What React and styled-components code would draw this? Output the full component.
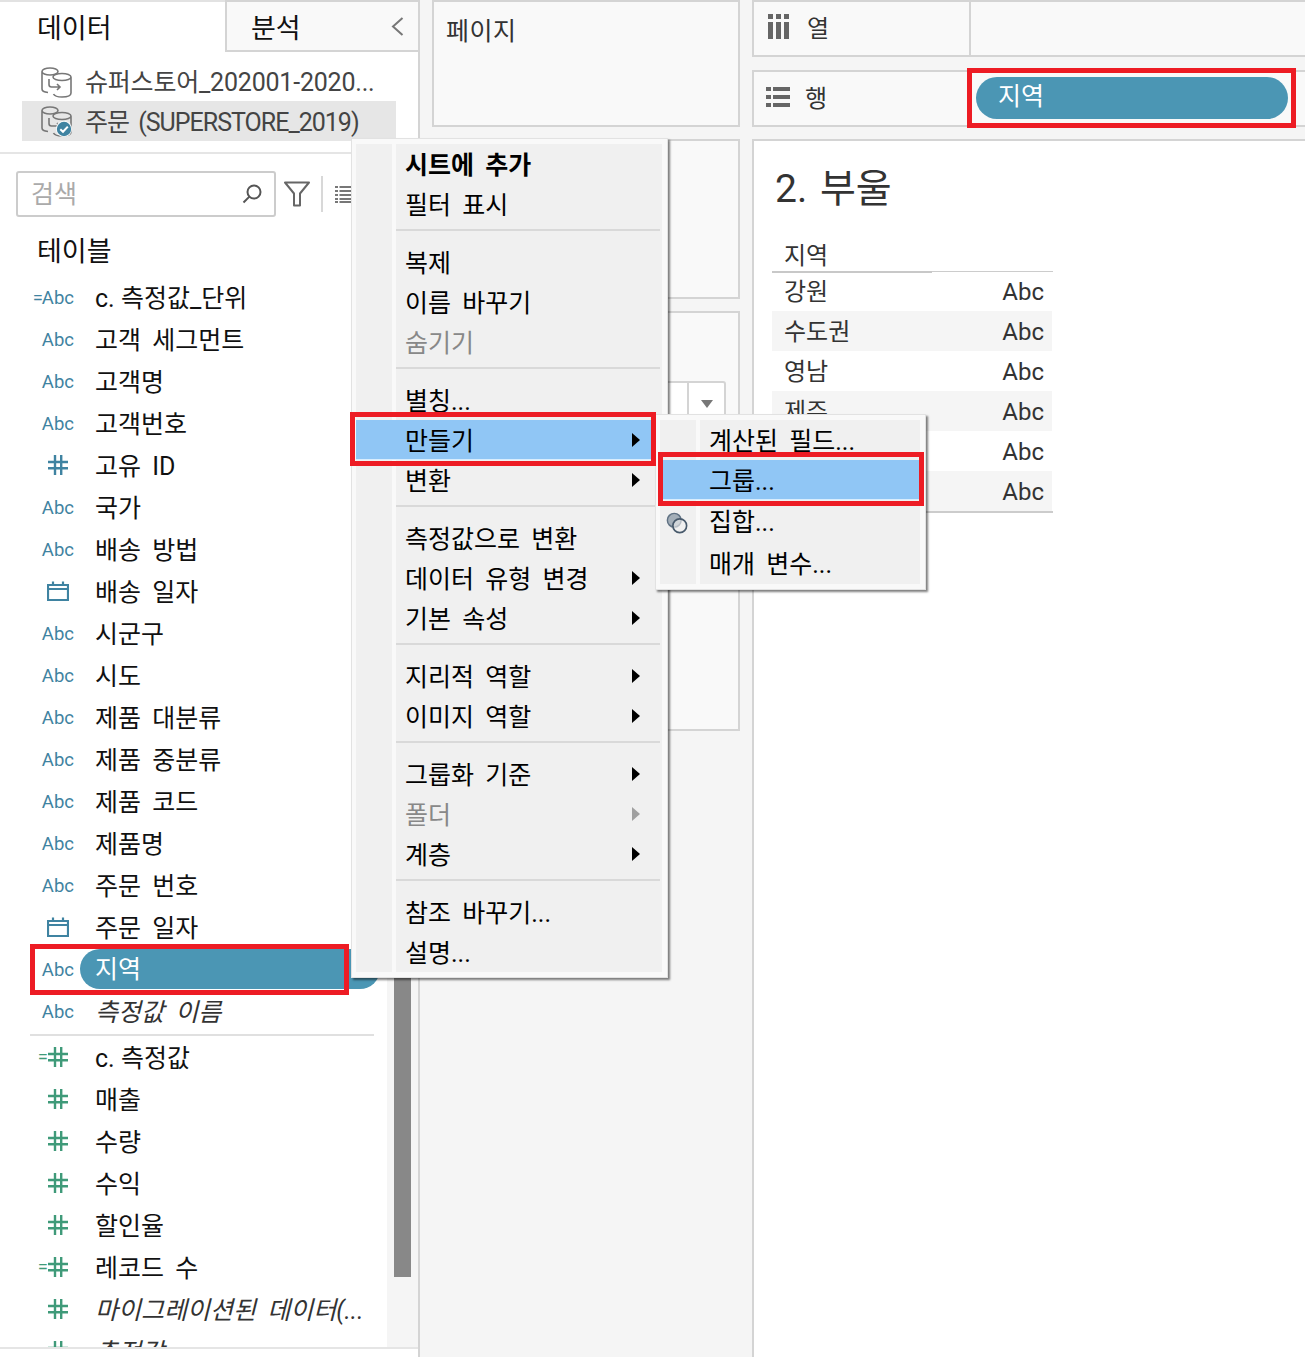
import React from "react";
import styled, { createGlobalStyle } from "styled-components";

const GlobalStyle = createGlobalStyle`
    html, body {
        margin: 0;
        padding: 0;
        background: #ffffff;
    }
    * {
        box-sizing: border-box;
    }
    body {
        font-family: Roboto, "Noto Sans CJK KR", sans-serif;
        word-spacing: 5px;
    }
`;

const BORDER = "#d4d4d4";
const TEAL = "#4b96b4";
const BLUE_ICON = "#3f83a1";
const GREEN_ICON = "#3f9a79";
const RED = "#ed1c24";

const Page = styled.div`
    position: relative;
    display: grid;
    grid-template-columns: 420px 332px 553px;
    width: 1305px;
    height: 1357px;
    overflow: hidden;
    background: #f5f5f5;
`;

const RedBox = styled.div`
    position: absolute;
    top: ${(p) => p.$top}px;
    left: ${(p) => p.$left}px;
    width: ${(p) => p.$width}px;
    height: ${(p) => p.$height}px;
    border: 5px solid ${RED};
    z-index: 3;
    pointer-events: none;
`;

/* left side */
const LeftPanel = styled.aside`
    display: flex;
    flex-direction: column;
    height: 1357px;
    background: #ffffff;
    border-right: 2px solid ${BORDER};
`;

const TabBar = styled.div`
    display: flex;
    height: 52px;
    flex: none;
`;

const DataTab = styled.div`
    display: flex;
    align-items: center;
    width: 225px;
    padding-left: 37px;
    padding-bottom: 2px;
    font-size: 27px;
    color: #111;
    border-top: 2px solid #e2e2e2;
`;

const AnalysisTab = styled.div`
    display: flex;
    flex: 1;
    align-items: center;
    justify-content: space-between;
    padding: 0 14px 0 24px;
    font-size: 27px;
    color: #111;
    background: #f9f9f9;
    border: 2px solid ${BORDER};
    border-right: 0;
`;

const SourceList = styled.div`
    flex: none;
    padding-top: 10px;
    padding-bottom: 11px;
    border-bottom: 2px solid #e5e5e5;
`;

const SourceRow = styled.div`
    display: flex;
    align-items: center;
    gap: 13px;
    width: 374px;
    height: ${(p) => (p.$active ? 40 : 39)}px;
    margin-left: 22px;
    padding-left: 18px;
    font-size: 25px;
    color: #444;
    white-space: nowrap;
    background: ${(p) => (p.$active ? "#e6e6e6" : "transparent")};
`;

const SourceName = styled.span`
    margin-top: -3px;
    letter-spacing: ${(p) => p.$tracking}px;
    word-spacing: 4px;
`;

const Lower = styled.div`
    display: flex;
    flex: none;
    height: 1193px;
    overflow: hidden;
`;

const LowerMain = styled.div`
    flex: 1;
    min-width: 0;
`;

const SearchRow = styled.div`
    display: flex;
    align-items: center;
    height: 46px;
    margin-top: 17px;
    padding-left: 16px;
`;

const SearchBox = styled.div`
    display: flex;
    align-items: center;
    justify-content: space-between;
    width: 260px;
    height: 46px;
    padding: 0 12px 0 13px;
    font-size: 25px;
    color: #aaa;
    border: 2px solid #cccccc;
    border-radius: 3px;
`;

const SearchHint = styled.span`
    margin-top: -4px;
`;

const FilterButton = styled.div`
    display: flex;
    margin-left: 8px;
`;

const ToolDivider = styled.div`
    width: 2px;
    height: 36px;
    margin: 0 12px 0 11px;
    background: #d8d8d8;
`;

const SectionTitle = styled.div`
    display: flex;
    align-items: center;
    height: 59px;
    padding: 6px 0 0 37px;
    font-size: 27px;
    color: #111;
`;

const FieldRow = styled.div`
    position: relative;
    display: flex;
    align-items: center;
    height: 42px;
    font-size: 25px;
    color: #111;
    white-space: nowrap;
`;

const IconSlot = styled.div`
    display: flex;
    flex: none;
    align-items: center;
    justify-content: flex-end;
    width: 74px;
    padding-top: ${(p) => (p.$text ? 2 : 0)}px;
    font-size: 18.5px;
    color: ${(p) => p.$color};
    word-spacing: 0;
`;

const CalcMark = styled.span`
    margin-right: ${(p) => p.$gap}px;
`;

const FieldName = styled.span`
    margin-left: 21px;
    padding-bottom: 2px;
    font-style: ${(p) => (p.$italic ? "italic" : "normal")};
    color: ${(p) => (p.$italic ? "#333" : "#111")};
    word-spacing: ${(p) => (p.$tight ? 0 : 5)}px;
`;

const FieldPill = styled.div`
    display: flex;
    align-items: center;
    width: 300px;
    height: 40px;
    margin-left: 6px;
    padding: 0 0 4px 15px;
    font-size: 25px;
    color: #ffffff;
    background: ${TEAL};
    border-radius: 20px;
`;

const FieldDivider = styled.div`
    width: 344px;
    height: 2px;
    margin: 2px 0 0 30px;
    background: #e0e0e0;
`;

const ScrollTrack = styled.div`
    flex: none;
    width: 31px;
    padding: 10px 7px 0;
    background: #f5f5f5;
`;

const ScrollThumb = styled.div`
    height: 1113px;
    background: #888888;
`;

const LowerRule = styled.div`
    flex: none;
    height: 2px;
    background: #e5e5e5;
`;

/* middle cards */
const MiddleColumn = styled.section`
    display: flex;
    flex-direction: column;
    gap: 12px;
    padding: 0 12px;
`;

const Card = styled.div`
    flex: none;
    height: ${(p) => p.$height}px;
    padding: 15px 12px;
    font-size: 25px;
    line-height: 30px;
    letter-spacing: 0.5px;
    color: #333;
    background: #f9f9f9;
    border: 2px solid ${BORDER};
`;

const Dropdown = styled.div`
    display: flex;
    justify-content: flex-end;
    height: 44px;
    margin-top: 23px;
    background: #ffffff;
    border: 2px solid ${BORDER};
    border-radius: 3px;
`;

const DropLabel = styled.span`
    flex: 1;
    padding-left: 10px;
`;

const DropButton = styled.div`
    display: flex;
    justify-content: center;
    width: 37px;
    padding-top: 17px;
    border-left: 2px solid ${BORDER};
`;

const DropArrow = styled.span`
    width: 0;
    height: 0;
    border-top: 8px solid #777;
    border-left: 6px solid transparent;
    border-right: 6px solid transparent;
`;

/* right side */
const RightColumn = styled.main`
    display: flex;
    flex-direction: column;
`;

const Shelf = styled.div`
    display: flex;
    flex: none;
    align-items: center;
    height: ${(p) => p.$height}px;
    margin-bottom: ${(p) => p.$gap}px;
    background: #f9f9f9;
    border: 2px solid ${BORDER};
    border-right: 0;
`;

const ShelfLabel = styled.div`
    display: flex;
    flex: none;
    align-items: center;
    gap: ${(p) => (p.$divider ? 18 : 15)}px;
    width: ${(p) => (p.$divider ? 217 : 222)}px;
    height: 100%;
    padding-left: ${(p) => (p.$divider ? 14 : 12)}px;
    padding-bottom: 4px;
    font-size: 24px;
    color: #333;
    border-right: ${(p) => (p.$divider ? `2px solid ${BORDER}` : "0")};
`;

const ShelfPill = styled.div`
    position: relative;
    display: flex;
    align-items: center;
    width: 312px;
    height: 42px;
    margin-top: -2px;
    padding: 0 0 8px 22px;
    font-size: 25px;
    color: #ffffff;
    background: ${TEAL};
    border-radius: 21px;
`;

const View = styled.div`
    flex: 1;
    background: #ffffff;
    border-top: 2px solid ${BORDER};
    border-left: 2px solid ${BORDER};
`;

const ViewTitle = styled.h1`
    height: 97px;
    margin: 0;
    padding: 18px 0 0 21px;
    font-size: 39px;
    font-weight: 400;
    line-height: 60px;
    word-spacing: 3px;
    color: #333;
`;

const VizTable = styled.div`
    width: 281px;
    margin-left: 18px;
    font-size: 24px;
    color: #333;
    border-bottom: 2px solid #cccccc;
`;

const VizHeader = styled.div`
    height: 34px;
    border-bottom: 1px solid #cccccc;
`;

const VizHeaderCell = styled.div`
    width: 160px;
    height: 35px;
    padding-left: 12px;
    line-height: 36px;
    border-bottom: 2px solid #c8c8c8;
`;

const VizRow = styled.div`
    display: flex;
    align-items: center;
    justify-content: space-between;
    width: 280px;
    height: 40px;
    padding: 0 8px 0 12px;
    &:first-child {
        height: 39px;
    }
    &:nth-child(even) {
        background: #f5f5f5;
    }
`;

const VizName = styled.span`
    padding-bottom: 4px;
`;

const VizValue = styled.span`
    padding-top: 1px;
`;

/* context menu */
const Menu = styled.div`
    position: absolute;
    top: ${(p) => p.$top}px;
    left: ${(p) => p.$left}px;
    width: ${(p) => p.$width}px;
    padding: 5px 5px 5px 4px;
    background: #f9f9f9;
    border: 1px solid #e2e2e2;
    box-shadow: 2px 2px 2px rgba(0, 0, 0, 0.5);
    z-index: ${(p) => p.$z};
`;

const MenuRow = styled.div`
    position: relative;
    display: flex;
    height: ${(p) => p.$height || 40}px;
    font-size: 25px;
    color: ${(p) => (p.$disabled ? "#888" : "#000")};
    font-weight: ${(p) => (p.$bold ? 700 : 400)};
    white-space: nowrap;
    background: ${(p) => (p.$selected ? "#90c6f5" : "transparent")};
    box-shadow: ${(p) => (p.$selected ? "inset 0 -1px 0 #d9edfd" : "none")};
`;

const MenuGutter = styled.div`
    display: flex;
    flex: none;
    align-items: center;
    justify-content: center;
    width: 36px;
    margin-right: 4px;
    background: ${(p) => (p.$selected ? "transparent" : "#f0f0f0")};
`;

const MenuLabel = styled.div`
    display: flex;
    flex: 1;
    align-items: center;
    padding: 0 22px 3px 9px;
    background: ${(p) => (p.$selected ? "transparent" : "#f0f0f0")};
`;

const SubArrow = styled.span`
    flex: none;
    width: 0;
    height: 0;
    margin-left: auto;
    margin-top: 3px;
    border-left: 8px solid ${(p) => (p.$disabled ? "#a0a0a0" : "#000")};
    border-top: 7px solid transparent;
    border-bottom: 7px solid transparent;
`;

const MenuRule = styled.div`
    height: 2px;
    margin: 5px 2px 11px 0;
    background: #d9d9d9;
`;

const MenuSeparator = styled.div`
    display: flex;
    height: 18px;
`;

const SeparatorBody = styled.div`
    flex: 1;
    background: #f0f0f0;
    overflow: hidden;
`;

const VennSlot = styled.div`
    display: flex;
    margin: 4px 2px 0 0;
`;

const HashIcon = ({ color, right = 6 }) => (
    <svg width="20" height="20" viewBox="0 0 20 20" style={{ marginRight: right }}>
        <path d="M7 0V20M13.2 0V20M0 7H20M0 13.2H20" stroke={color} strokeWidth="2.4" fill="none" />
    </svg>
);

const CalendarIcon = () => (
    <svg width="22" height="20" viewBox="0 0 22 20" style={{ marginRight: 5 }}>
        <path
            d="M1 4H21V19H1ZM1 8H21M6 0.5V4M16 0.5V4"
            stroke={BLUE_ICON}
            strokeWidth="2.2"
            fill="none"
        />
    </svg>
);

const SourceIcon = ({ badge }) => (
    <svg width="32" height="32" viewBox="0 0 32 32" fill="none">
        <g stroke="#777" strokeWidth="1.6">
            <path d="M2 5.5C2 3.5 5.5 2 10 2S18 3.5 18 5.5C18 7.5 14.5 9 10 9S2 7.5 2 5.5ZM2 5.5V23C2 25 4.5 26.2 8 26.5" />
            <path d="M13 11C13 9 17 7.5 22 7.5S31 9 31 11C31 13 27 14.5 22 14.5S13 13 13 11ZM31 11V27C31 29.5 27 31 22 31C18 31 14.5 30 13.5 28" />
            <path d="M9 13V18.5C9 20 10 21 11.5 21H20M17 18L20 21L17 24" />
        </g>
        {badge && (
            <g>
                <circle cx="24" cy="24" r="8" fill="#ffffff" />
                <circle cx="24" cy="24" r="7.2" fill={BLUE_ICON} />
                <path d="M20.3 24.2L23 26.8L27.8 21.6" stroke="#ffffff" strokeWidth="2" />
            </g>
        )}
    </svg>
);

const SearchIcon = () => (
    <svg width="20" height="20" viewBox="0 0 20 20" fill="none" stroke="#555" strokeWidth="2">
        <circle cx="12" cy="8" r="6.5" />
        <path d="M7.4 12.6L1.5 18.5" />
    </svg>
);

const FunnelIcon = () => (
    <svg width="26" height="26" viewBox="0 0 26 26" fill="none" stroke="#666" strokeWidth="2">
        <path d="M1 1.5H25L16 12.5V24.5H10V12.5Z" strokeLinejoin="round" />
    </svg>
);

const DenseListIcon = () => (
    <svg width="18" height="18" viewBox="0 0 18 18" fill="none" stroke="#777" strokeWidth="2">
        <path d="M0 2H3M4.5 2H18M0 6H3M4.5 6H18M0 10H3M4.5 10H18M0 14H3M4.5 14H18M0 17H3M4.5 17H18" />
    </svg>
);

const ChevronIcon = () => (
    <svg width="13" height="19" viewBox="0 0 13 19" fill="none" stroke="#777" strokeWidth="2">
        <path d="M11.5 1L2 9.5L11.5 18" />
    </svg>
);

const ColumnsIcon = () => (
    <svg width="21" height="25" viewBox="0 0 21 25" fill="#666">
        <path d="M0 0H5V5H0ZM8 0H13V5H8ZM16 0H21V5H16ZM0 8H5V25H0ZM8 8H13V25H8ZM16 8H21V25H16Z" />
    </svg>
);

const RowsIcon = () => (
    <svg width="24" height="20" viewBox="0 0 24 20" fill="#666">
        <path d="M0 0H5V4H0ZM7 0H24V4H7ZM0 8H5V12H0ZM7 8H24V12H7ZM0 16H5V20H0ZM7 16H24V20H7Z" />
    </svg>
);

const VennIcon = () => (
    <svg width="22" height="22" viewBox="0 0 24 24" fill="none">
        <circle cx="9" cy="9" r="7.5" fill="#a3aeb8" stroke="#5f7183" strokeWidth="1.6" />
        <circle cx="15" cy="15" r="7.5" fill="#f0f0f0" fillOpacity="0.6" stroke="#47596b" strokeWidth="1.8" />
    </svg>
);

const abc = { text: "Abc" };
const hash = (color, calc) => ({ hash: color, calc });

const dimensions = [
    { name: "c. 측정값_단위", icon: { text: "Abc", calc: true }, tight: true },
    { name: "고객 세그먼트", icon: abc },
    { name: "고객명", icon: abc },
    { name: "고객번호", icon: abc },
    { name: "고유 ID", icon: hash(BLUE_ICON) },
    { name: "국가", icon: abc },
    { name: "배송 방법", icon: abc },
    { name: "배송 일자", icon: { calendar: true } },
    { name: "시군구", icon: abc },
    { name: "시도", icon: abc },
    { name: "제품 대분류", icon: abc },
    { name: "제품 중분류", icon: abc },
    { name: "제품 코드", icon: abc },
    { name: "제품명", icon: abc },
    { name: "주문 번호", icon: abc },
    { name: "주문 일자", icon: { calendar: true } },
    { name: "지역", icon: abc, dragging: true },
    { name: "측정값 이름", icon: abc, italic: true },
];

const measures = [
    { name: "c. 측정값", icon: hash(GREEN_ICON, true), tight: true },
    { name: "매출", icon: hash(GREEN_ICON) },
    { name: "수량", icon: hash(GREEN_ICON) },
    { name: "수익", icon: hash(GREEN_ICON) },
    { name: "할인율", icon: hash(GREEN_ICON) },
    { name: "레코드 수", icon: hash(GREEN_ICON, true) },
    { name: "마이그레이션된 데이터(...", icon: hash(GREEN_ICON), italic: true },
    { name: "측정값", icon: hash(GREEN_ICON), italic: true },
];

const menuGroups = [
    [{ label: "시트에 추가", bold: true }, { label: "필터 표시" }],
    [{ label: "복제" }, { label: "이름 바꾸기" }, { label: "숨기기", disabled: true }],
    [{ label: "별칭..." }, { label: "만들기", sub: true, selected: true }, { label: "변환", sub: true }],
    [{ label: "측정값으로 변환" }, { label: "데이터 유형 변경", sub: true }, { label: "기본 속성", sub: true }],
    [{ label: "지리적 역할", sub: true }, { label: "이미지 역할", sub: true }],
    [{ label: "그룹화 기준", sub: true }, { label: "폴더", sub: true, disabled: true }, { label: "계층", sub: true }],
    [{ label: "참조 바꾸기..." }, { label: "설명..." }],
];

const regions = ["강원", "수도권", "영남", "제주", "충청", "호남"];

const FieldIcon = ({ icon }) => {
    if (icon.calendar) {
        return (
            <IconSlot>
                <CalendarIcon />
            </IconSlot>
        );
    }
    if (icon.hash) {
        return (
            <IconSlot $color={icon.hash}>
                {icon.calc && <CalcMark $gap={0}>=</CalcMark>}
                <HashIcon color={icon.hash} />
            </IconSlot>
        );
    }
    return (
        <IconSlot $color={BLUE_ICON} $text>
            {icon.calc && <CalcMark $gap={-1}>=</CalcMark>}
            {icon.text}
        </IconSlot>
    );
};

const Field = ({ field }) => (
    <FieldRow>
        <FieldIcon icon={field.icon} />
        {field.dragging ? (
            <>
                <FieldPill>{field.name}</FieldPill>
                <RedBox $top={-4} $left={30} $width={319} $height={51} />
            </>
        ) : (
            <FieldName $italic={field.italic} $tight={field.tight}>
                {field.name}
            </FieldName>
        )}
    </FieldRow>
);

const Separator = () => (
    <MenuSeparator>
        <MenuGutter />
        <SeparatorBody>
            <MenuRule />
        </SeparatorBody>
    </MenuSeparator>
);

const CreateSubmenu = () => (
    <Menu $top={275} $left={303} $width={271} $z={1}>
        <MenuRow>
            <MenuGutter />
            <MenuLabel>계산된 필드...</MenuLabel>
        </MenuRow>
        <MenuRow $selected>
            <MenuGutter $selected />
            <MenuLabel $selected>그룹...</MenuLabel>
            <RedBox $top={-8} $left={-2} $width={266} $height={54} />
        </MenuRow>
        <MenuRow $height={42}>
            <MenuGutter>
                <VennSlot>
                    <VennIcon />
                </VennSlot>
            </MenuGutter>
            <MenuLabel>집합...</MenuLabel>
        </MenuRow>
        <MenuRow $height={42}>
            <MenuGutter />
            <MenuLabel>매개 변수...</MenuLabel>
        </MenuRow>
    </Menu>
);

const FieldMenu = () => (
    <Menu $top={138} $left={351} $width={317} $z={5}>
        {menuGroups.map((group, i) => (
            <React.Fragment key={i}>
                {i > 0 && <Separator />}
                {group.map((item) => (
                    <MenuRow
                        key={item.label}
                        $bold={item.bold}
                        $disabled={item.disabled}
                        $selected={item.selected}
                    >
                        <MenuGutter $selected={item.selected} />
                        <MenuLabel $selected={item.selected}>
                            {item.label}
                            {item.sub && <SubArrow $disabled={item.disabled} />}
                        </MenuLabel>
                        {item.selected && <RedBox $top={-8} $left={-6} $width={306} $height={54} />}
                    </MenuRow>
                ))}
            </React.Fragment>
        ))}
        <CreateSubmenu />
    </Menu>
);

const App = () => (
    <Page>
        <GlobalStyle />
        <LeftPanel>
            <TabBar>
                <DataTab>데이터</DataTab>
                <AnalysisTab>
                    분석
                    <ChevronIcon />
                </AnalysisTab>
            </TabBar>
            <SourceList>
                <SourceRow>
                    <SourceIcon />
                    <SourceName $tracking={-0.2}>슈퍼스토어_202001-2020...</SourceName>
                </SourceRow>
                <SourceRow $active>
                    <SourceIcon badge />
                    <SourceName $tracking={-1}>주문 (SUPERSTORE_2019)</SourceName>
                </SourceRow>
            </SourceList>
            <Lower>
                <LowerMain>
                    <SearchRow>
                        <SearchBox>
                            <SearchHint>검색</SearchHint>
                            <SearchIcon />
                        </SearchBox>
                        <FilterButton>
                            <FunnelIcon />
                        </FilterButton>
                        <ToolDivider />
                        <DenseListIcon />
                    </SearchRow>
                    <SectionTitle>테이블</SectionTitle>
                    {dimensions.map((field) => (
                        <Field key={field.name} field={field} />
                    ))}
                    <FieldDivider />
                    {measures.map((field) => (
                        <Field key={field.name} field={field} />
                    ))}
                </LowerMain>
                <ScrollTrack>
                    <ScrollThumb />
                </ScrollTrack>
            </Lower>
            <LowerRule />
        </LeftPanel>

        <MiddleColumn>
            <Card $height={127}>페이지</Card>
            <Card $height={160}>필터</Card>
            <Card $height={420}>
                마크
                <Dropdown>
                    <DropLabel>자동</DropLabel>
                    <DropButton>
                        <DropArrow />
                    </DropButton>
                </Dropdown>
            </Card>
        </MiddleColumn>

        <RightColumn>
            <Shelf $height={57} $gap={13}>
                <ShelfLabel $divider>
                    <ColumnsIcon />열
                </ShelfLabel>
            </Shelf>
            <Shelf $height={57} $gap={12}>
                <ShelfLabel>
                    <RowsIcon />행
                </ShelfLabel>
                <ShelfPill>
                    지역
                    <RedBox $top={-9} $left={-9} $width={329} $height={60} />
                </ShelfPill>
            </Shelf>
            <View>
                <ViewTitle>2. 부울</ViewTitle>
                <VizTable>
                    <VizHeader>
                        <VizHeaderCell>지역</VizHeaderCell>
                    </VizHeader>
                    <div>
                        {regions.map((region) => (
                            <VizRow key={region}>
                                <VizName>{region}</VizName>
                                <VizValue>Abc</VizValue>
                            </VizRow>
                        ))}
                    </div>
                </VizTable>
            </View>
        </RightColumn>

        <FieldMenu />
    </Page>
);

export default App;
